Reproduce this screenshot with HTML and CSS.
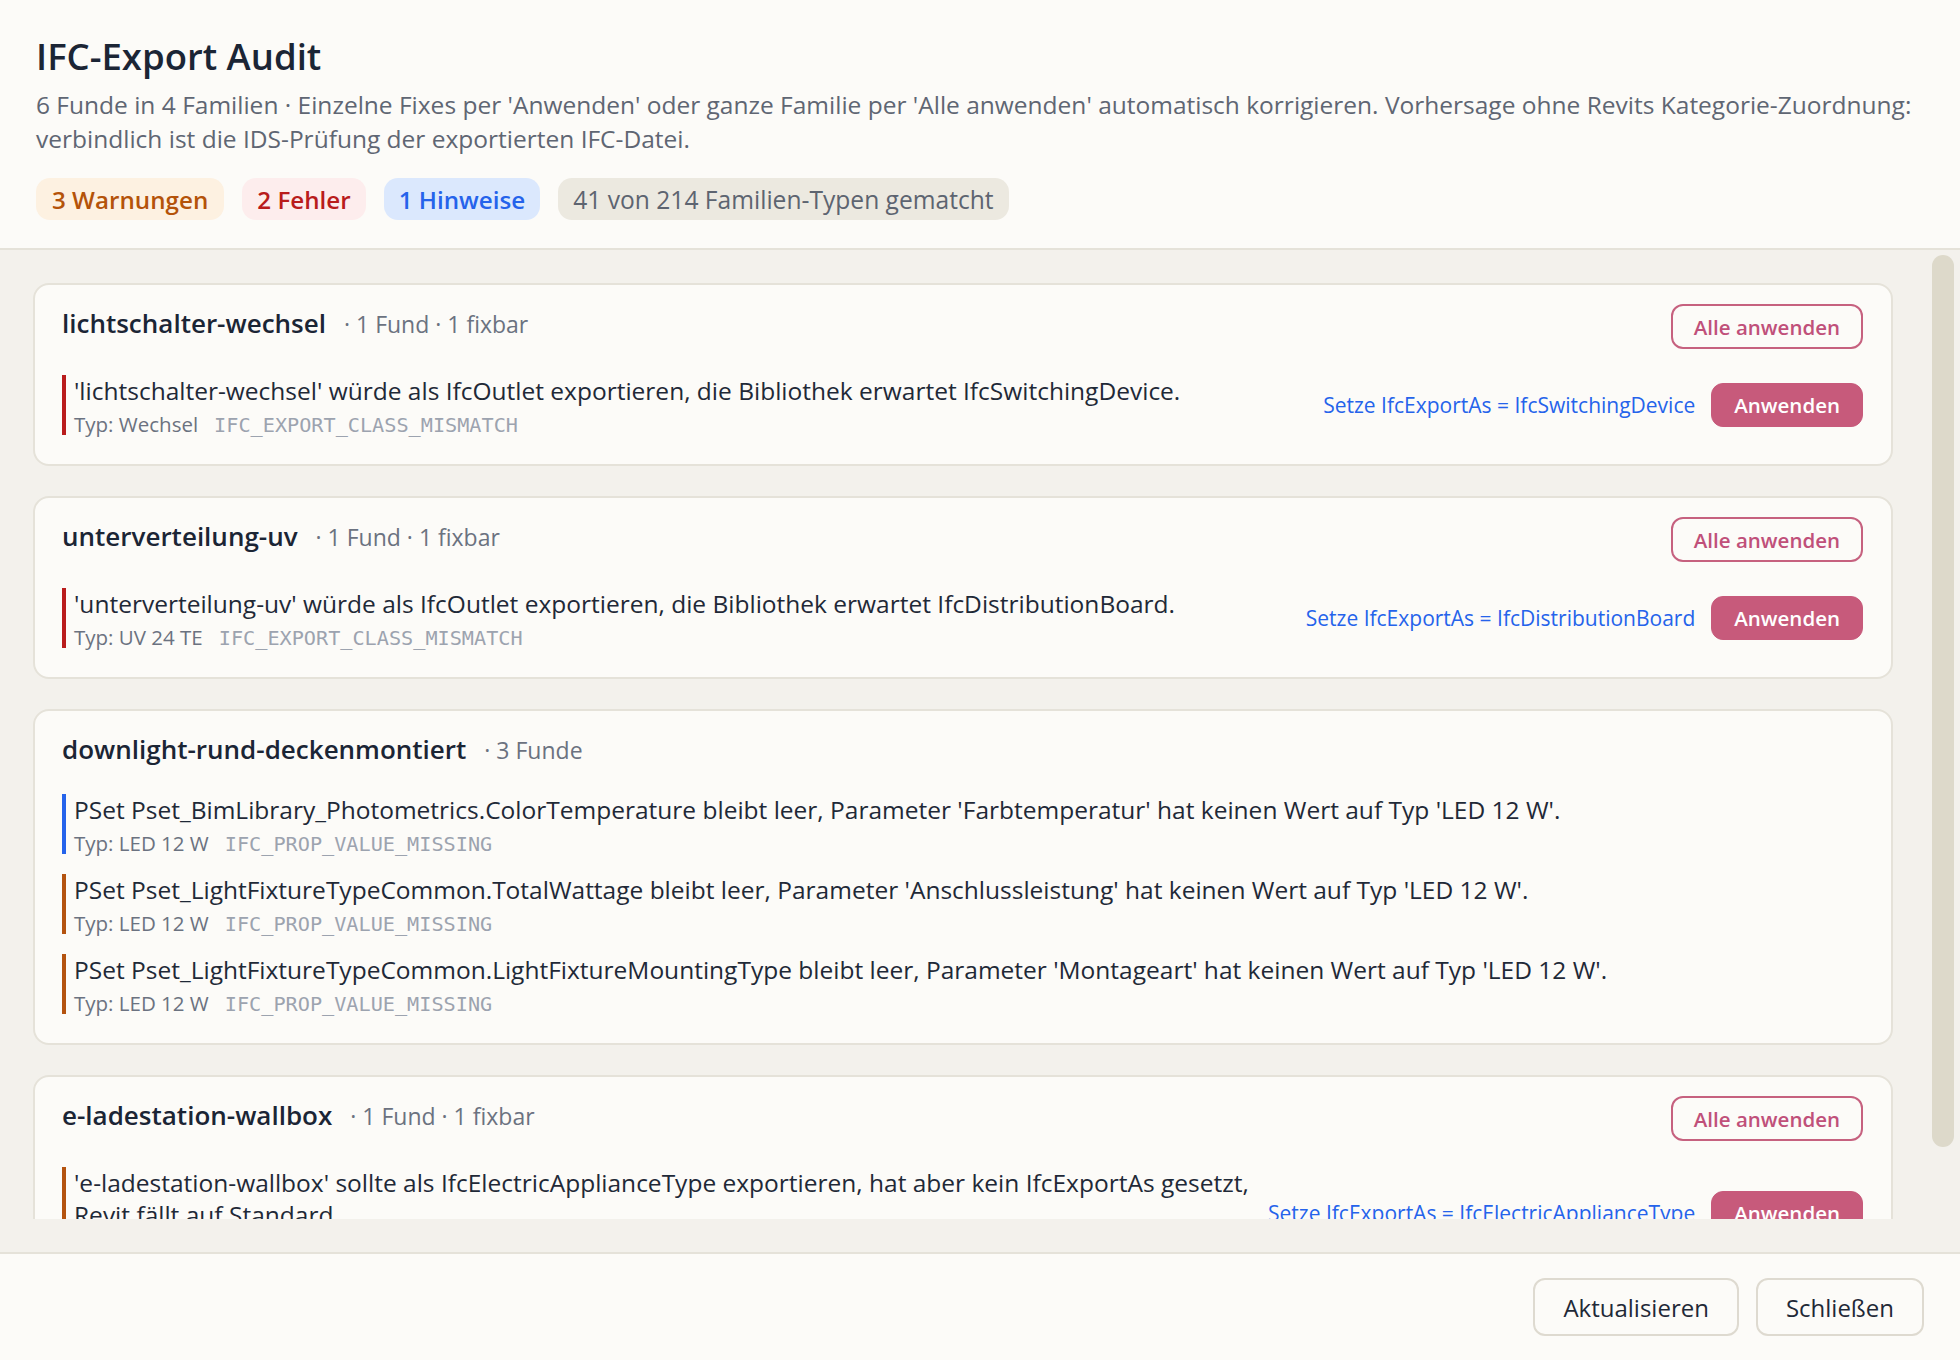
FILE: index.html
```html
<!DOCTYPE html>
<html lang="de">
<head>
  <meta charset="UTF-8">
  <meta name="viewport" content="width=device-width, initial-scale=1.0">
  <title>IFC-Export Audit</title>
  <link rel="stylesheet" href="styles.css">
</head>
<body>
  <div class="dialog">
    <header class="head">
      <h1 class="title">IFC-Export Audit</h1>
      <p class="intro">6 Funde in 4 Familien · Einzelne Fixes per 'Anwenden' oder ganze Familie per 'Alle anwenden' automatisch korrigieren. Vorhersage ohne Revits Kategorie-Zuordnung: verbindlich ist die IDS-Prüfung der exportierten IFC-Datei.</p>
      <div class="badges">
        <span class="badge warn">3 Warnungen</span>
        <span class="badge error">2 Fehler</span>
        <span class="badge info">1 Hinweise</span>
        <span class="badge muted">41 von 214 Familien-Typen gematcht</span>
      </div>
    </header>

    <main class="body">
      <div class="scroller">
        <div class="list">
          <section class="family">
            <div class="family-head">
              <div class="family-title">
                <h2 class="family-name">lichtschalter-wechsel</h2>
                <span class="family-meta">· 1 Fund · 1 fixbar</span>
              </div>
              <button class="btn btn-outline">Alle anwenden</button>
            </div>
            <div class="findings">
              <div class="finding is-error">
                <div class="finding-text">
                  <div class="msg">'lichtschalter-wechsel' würde als IfcOutlet exportieren, die Bibliothek erwartet IfcSwitchingDevice.</div>
                  <div class="sub"><span>Typ: Wechsel</span><code class="code">IFC_EXPORT_CLASS_MISMATCH</code></div>
                </div>
                <div class="fix">
                  <span class="fix-label">Setze IfcExportAs = IfcSwitchingDevice</span>
                  <button class="btn btn-fill">Anwenden</button>
                </div>
              </div>
            </div>
          </section>

          <section class="family">
            <div class="family-head">
              <div class="family-title">
                <h2 class="family-name">unterverteilung-uv</h2>
                <span class="family-meta">· 1 Fund · 1 fixbar</span>
              </div>
              <button class="btn btn-outline">Alle anwenden</button>
            </div>
            <div class="findings">
              <div class="finding is-error">
                <div class="finding-text">
                  <div class="msg">'unterverteilung-uv' würde als IfcOutlet exportieren, die Bibliothek erwartet IfcDistributionBoard.</div>
                  <div class="sub"><span>Typ: UV 24 TE</span><code class="code">IFC_EXPORT_CLASS_MISMATCH</code></div>
                </div>
                <div class="fix">
                  <span class="fix-label">Setze IfcExportAs = IfcDistributionBoard</span>
                  <button class="btn btn-fill">Anwenden</button>
                </div>
              </div>
            </div>
          </section>

          <section class="family">
            <div class="family-head">
              <div class="family-title">
                <h2 class="family-name">downlight-rund-deckenmontiert</h2>
                <span class="family-meta">· 3 Funde</span>
              </div>
            </div>
            <div class="findings">
              <div class="finding is-info">
                <div class="finding-text">
                  <div class="msg">PSet Pset_BimLibrary_Photometrics.ColorTemperature bleibt leer, Parameter 'Farbtemperatur' hat keinen Wert auf Typ 'LED 12 W'.</div>
                  <div class="sub"><span>Typ: LED 12 W</span><code class="code">IFC_PROP_VALUE_MISSING</code></div>
                </div>
              </div>
              <div class="finding is-warn">
                <div class="finding-text">
                  <div class="msg">PSet Pset_LightFixtureTypeCommon.TotalWattage bleibt leer, Parameter 'Anschlussleistung' hat keinen Wert auf Typ 'LED 12 W'.</div>
                  <div class="sub"><span>Typ: LED 12 W</span><code class="code">IFC_PROP_VALUE_MISSING</code></div>
                </div>
              </div>
              <div class="finding is-warn">
                <div class="finding-text">
                  <div class="msg">PSet Pset_LightFixtureTypeCommon.LightFixtureMountingType bleibt leer, Parameter 'Montageart' hat keinen Wert auf Typ 'LED 12 W'.</div>
                  <div class="sub"><span>Typ: LED 12 W</span><code class="code">IFC_PROP_VALUE_MISSING</code></div>
                </div>
              </div>
            </div>
          </section>

          <section class="family">
            <div class="family-head">
              <div class="family-title">
                <h2 class="family-name">e-ladestation-wallbox</h2>
                <span class="family-meta">· 1 Fund · 1 fixbar</span>
              </div>
              <button class="btn btn-outline">Alle anwenden</button>
            </div>
            <div class="findings">
              <div class="finding is-warn">
                <div class="finding-text">
                  <div class="msg">'e-ladestation-wallbox' sollte als IfcElectricApplianceType exportieren, hat aber kein IfcExportAs gesetzt, Revit fällt auf Standard.</div>
                  <div class="sub"><span>Typ: 22 kW</span><code class="code">IFC_EXPORT_AS_MISSING</code></div>
                </div>
                <div class="fix">
                  <span class="fix-label">Setze IfcExportAs = IfcElectricApplianceType</span>
                  <button class="btn btn-fill">Anwenden</button>
                </div>
              </div>
            </div>
          </section>
        </div>

        <!-- scroll indicator for the list -->
        <div class="scrollbar"><div class="thumb"></div></div>
      </div>
    </main>

    <footer class="foot">
      <button class="btn btn-plain">Aktualisieren</button>
      <button class="btn btn-plain">Schließen</button>
    </footer>
  </div>
</body>
</html>
```

FILE: styles.css
```css
html, body {
  margin: 0;
  height: 100%;
}
body {
  font-family: "Open Sans", "Noto Sans", sans-serif;
  color: #1f2937;
  background: #fcfbf8;
}
.dialog {
  height: 100%;
  display: flex;
  flex-direction: column;
}

/* header */
.head {
  padding: 33px 36px 28px;
  border-bottom: 2px solid #e5e2d9;
  background: #fcfbf8;
}
.title {
  margin: 0;
  font-size: 36.5px;
  line-height: 46px;
  font-weight: 600;
  color: #1b2535;
}
.intro {
  margin: 9px 0 0;
  font-size: 24.5px;
  line-height: 34px;
  color: #5f6673;
}
.badges {
  display: flex;
  gap: 18px;
  margin-top: 22px;
}
.badge {
  height: 42px;
  padding: 0 15px;
  display: flex;
  align-items: center;
  border-radius: 14px;
  font-size: 24.2px;
  font-weight: 600;
}
.badge.warn { background: #fdf1e1; color: #b45309; padding: 0 16px; }
.badge.error { background: #fdeded; color: #b91c1c; }
.badge.info { background: #dbe8fd; color: #2563eb; }
.badge.muted { background: #ece9e0; color: #5d6470; font-weight: 400; font-size: 24.6px; }

/* list area */
.body {
  flex: 1;
  min-height: 0;
  display: flex;
  flex-direction: column;
  padding-bottom: 33px;
  background: #f3f1ec;
}
.scroller {
  flex: 1;
  min-height: 0;
  display: flex;
}
.list {
  flex: 1;
  min-width: 0;
  overflow: hidden;
  padding: 33px 36px 0 33px;
  display: flex;
  flex-direction: column;
  gap: 30px;
}
.scrollbar {
  width: 22px;
  padding: 5px 6px 5px 3px;
}
.thumb {
  height: 93%;
  background: #ddd9ca;
  border-radius: 12px;
}

.family {
  flex-shrink: 0;
  background: #fcfbf8;
  border: 2px solid #e5e2d9;
  border-radius: 16px;
  padding: 19px 28px 29px 27px;
}
.family-head {
  display: flex;
  align-items: flex-start;
}
.family-title {
  display: flex;
  align-items: baseline;
  gap: 18px;
}
.family-name {
  margin: 0;
  font-size: 26px;
  line-height: 38px;
  font-weight: 600;
  color: #1b2535;
}
.family-meta {
  font-size: 23px;
  color: #6b7280;
}
.family-head .btn-outline {
  margin-left: auto;
}

.findings {
  margin-top: 26px;
  display: flex;
  flex-direction: column;
  gap: 20px;
}
.finding {
  display: flex;
  align-items: center;
  gap: 16px;
  border-left: 4px solid #b91c1c;
  padding-left: 8px;
}
.finding.is-error { border-left-color: #b91c1c; }
.finding.is-warn { border-left-color: #b4530f; }
.finding.is-info { border-left-color: #2563eb; }
.finding-text {
  flex: 1;
  min-width: 0;
}
.msg {
  font-size: 24.5px;
  line-height: 32px;
  color: #1f2937;
}
.sub {
  display: flex;
  align-items: baseline;
  gap: 16px;
  height: 22px;
  margin-top: 6px;
  font-size: 20.5px;
  line-height: 22px;
  color: #6b7280;
}
.code {
  font-family: "DejaVu Sans Mono", "Liberation Mono", monospace;
  font-size: 20.2px;
  color: #9ca3af;
}
.fix {
  display: flex;
  align-items: center;
  gap: 16px;
  flex-shrink: 0;
}
.fix-label {
  font-size: 21px;
  color: #2563eb;
}

/* buttons */
.btn {
  font-family: inherit;
  cursor: pointer;
  border-radius: 12px;
}
.btn-outline {
  height: 45px;
  padding: 0 21px;
  background: transparent;
  border: 2px solid #c6617f;
  color: #c0507a;
  font-size: 20.5px;
  font-weight: 600;
}
.btn-fill {
  height: 44px;
  padding: 0 22px;
  background: #c75a7b;
  border: 1px solid #c75a7b;
  color: #fff;
  font-size: 20.5px;
  font-weight: 600;
}

/* footer */
.foot {
  display: flex;
  justify-content: flex-end;
  gap: 17px;
  padding: 24px 36px;
  border-top: 2px solid #e5e2d9;
  background: #fcfbf8;
}
.btn-plain {
  height: 58px;
  padding: 0 28px;
  background: #fcfbf8;
  border: 2px solid #dedad0;
  color: #1f2937;
  font-size: 24px;
}
```
